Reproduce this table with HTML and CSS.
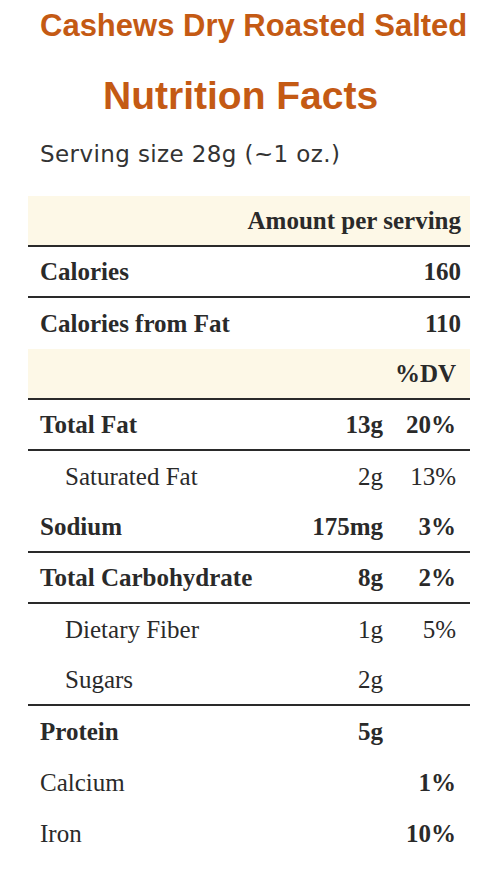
FILE: index.html
```html
<!DOCTYPE html>
<html>
<head>
<meta charset="utf-8">
<link rel="stylesheet" href="styles.css">
</head>
<body>
<h1 class="title">Cashews Dry Roasted Salted</h1>
<h2 class="heading">Nutrition Facts</h2>
<p class="serving">Serving size 28g (~1 oz.)</p>
<div class="facts">
  <div class="row shade line"><span class="right b">Amount per serving</span></div>
  <div class="row wide line"><span class="b">Calories</span><span class="b">160</span></div>
  <div class="row wide"><span class="b">Calories from Fat</span><span class="b">110</span></div>
  <div class="row shade line"><span></span><span></span><span class="num b">%DV</span></div>
  <div class="row line"><span class="b">Total Fat</span><span class="num b">13g</span><span class="num b">20%</span></div>
  <div class="row"><span class="sub">Saturated Fat</span><span class="num">2g</span><span class="num">13%</span></div>
  <div class="row line"><span class="b">Sodium</span><span class="num b">175mg</span><span class="num b">3%</span></div>
  <div class="row line"><span class="b">Total Carbohydrate</span><span class="num b">8g</span><span class="num b">2%</span></div>
  <div class="row"><span class="sub">Dietary Fiber</span><span class="num">1g</span><span class="num">5%</span></div>
  <div class="row line"><span class="sub">Sugars</span><span class="num">2g</span><span></span></div>
  <div class="row"><span class="b">Protein</span><span class="num b">5g</span><span></span></div>
  <div class="row"><span>Calcium</span><span></span><span class="num b">1%</span></div>
  <div class="row"><span>Iron</span><span></span><span class="num b">10%</span></div>
</div>
</body>
</html>
```
FILE: styles.css
```css
html, body {
  margin: 0;
  padding: 0;
  background: #ffffff;
}

.title {
  margin: 8px 0 0 0;
  padding-left: 40px;
  font-family: "Liberation Sans", Arial, sans-serif;
  font-weight: bold;
  font-size: 31px;
  line-height: 36px;
  color: #c45a14;
}

.heading {
  margin: 30px 0 0 0;
  padding-left: 103px;
  font-family: "Liberation Sans", Arial, sans-serif;
  font-weight: bold;
  font-size: 39px;
  line-height: 44px;
  color: #c45a14;
}

.serving {
  margin: 23px 0 0 0;
  padding-left: 40px;
  font-family: "DejaVu Sans", Verdana, sans-serif;
  font-size: 23px;
  line-height: 26px;
  letter-spacing: 0.4px;
  color: #333333;
}

.facts {
  margin: 29px 0 0 28px;
  width: 442px;
  font-family: "Liberation Serif", "Times New Roman", serif;
  font-size: 25px;
  color: #2a2a2a;
}

.row {
  box-sizing: border-box;
  height: 51px;
  display: grid;
  grid-template-columns: 1fr 90px 73px;
  align-items: center;
  padding: 0 14px 0 12px;
}

.row.wide {
  display: flex;
  justify-content: space-between;
  padding-right: 9px;
}

.row.shade {
  background: #fdf8e7;
}

.row.line {
  border-bottom: 2px solid #2a2a2a;
}

.right {
  grid-column: 1 / -1;
  text-align: right;
  margin-right: -5px;
}

.b {
  font-weight: bold;
}

.num {
  text-align: right;
}

.sub {
  padding-left: 25px;
}
```
